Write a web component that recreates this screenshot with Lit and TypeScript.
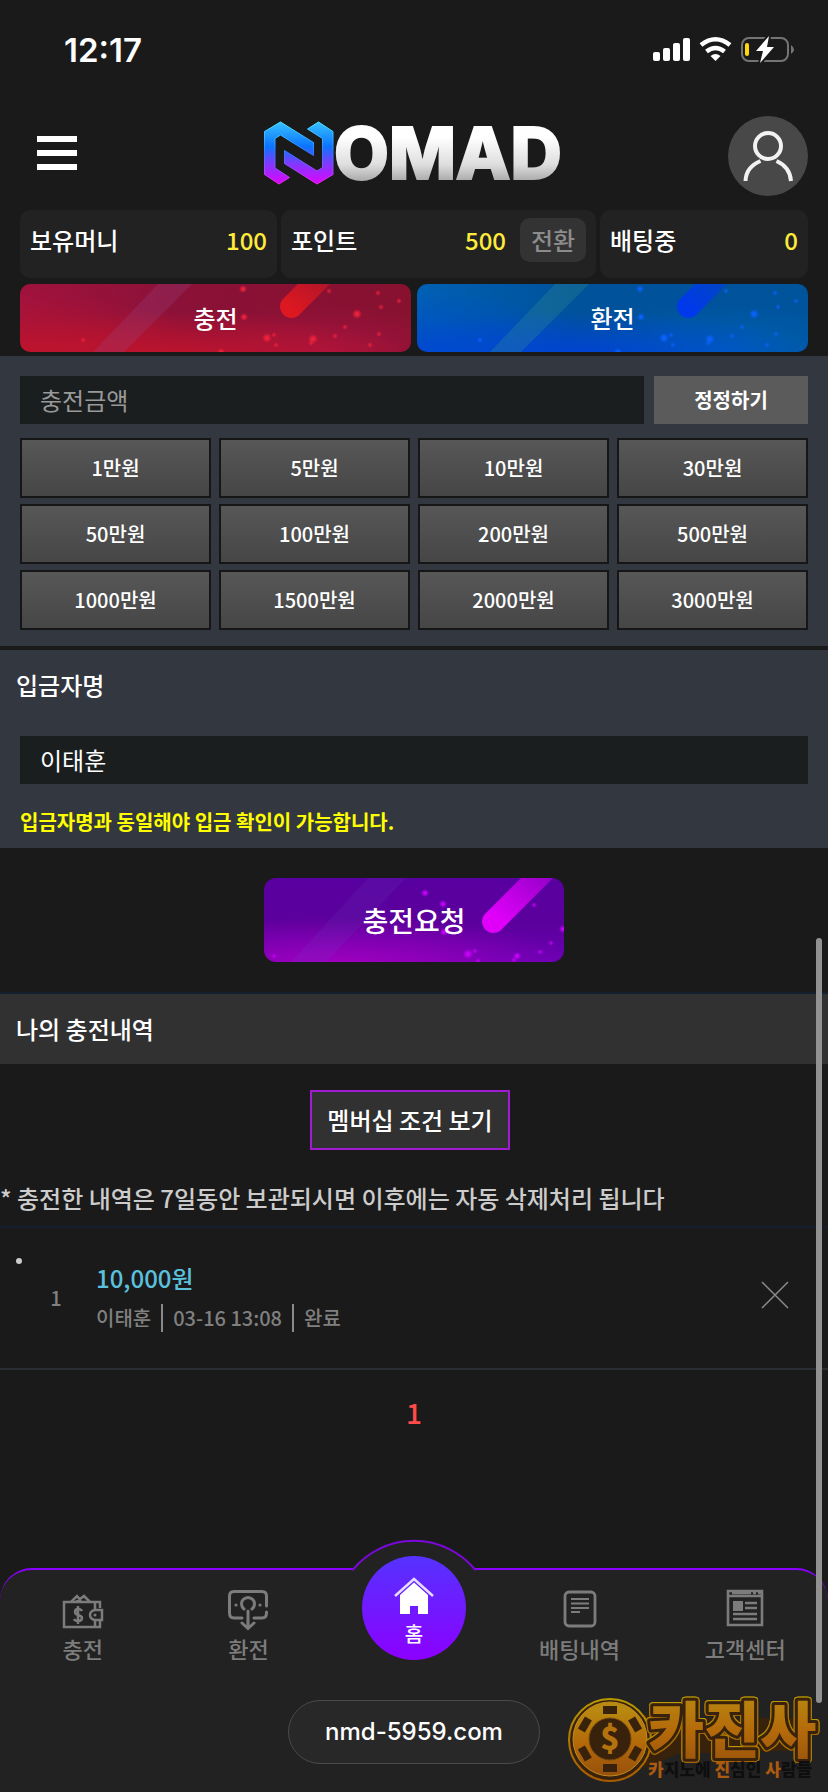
import { LitElement, html, css, svg } from "lit";
import { customElement, property, state } from "lit/decorators.js";

type Dot = [number, number, number];

const WIDE_DOTS: Dot[] = [
  [223, 5, 3], [224, 33, 3], [247, 54, 4], [254, 51, 2], [256, 61, 2], [293, 55, 4], [291, 59, 2],
  [315, 52, 2], [325, 43, 2], [337, 30, 4], [361, 23, 2], [358, 9, 2], [379, 17, 2], [309, 7, 2],
  [359, 50, 2], [350, 61, 2], [63, 56, 2], [201, 68, 3],
];
const COMPACT_DOTS: Dot[] = [
  [161, 15, 3], [179, 26, 3], [180, 54, 3], [204, 76, 4], [211, 73, 2], [214, 83, 2], [253, 78, 3],
  [250, 82, 2], [276, 74, 2], [287, 65, 2], [299, 51, 3], [270, 27, 2], [10, 78, 2],
];

/** Button with a glowing meteor backdrop. */
@customElement("glow-button")
class GlowButton extends LitElement {
  @property() tone = "red";
  @property() label = "";

  static styles = css`
    :host { display: block; }
    button {
      position: relative; display: block; width: 100%; height: 68px; padding: 0; border: 0;
      border-radius: 10px; overflow: hidden; color: #fff; cursor: pointer;
      font: 500 24px/36px "Noto Sans CJK KR", sans-serif;
    }
    .label { position: relative; }
    .art { position: absolute; inset: 0; width: 100%; height: 100%; }
    .red { background: radial-gradient(ellipse 60% 70% at 42% 110%, #c8142bdd, #c8142b00), radial-gradient(ellipse 50% 90% at 0 100%, #c0142acc, #c0142a00), radial-gradient(ellipse 40% 70% at 78% 100%, #b01446aa, #b0144600), linear-gradient(90deg, #a0123e, #8b1138 40%, #87112f); }
    .blue { background: radial-gradient(ellipse 60% 70% at 42% 110%, #0040e0dd, #0040e000), radial-gradient(ellipse 50% 90% at 0 100%, #0048d0cc, #0048d000), radial-gradient(ellipse 40% 70% at 78% 100%, #0066c4aa, #0066c400), linear-gradient(90deg, #0060b4, #00529a 40%, #00549c); }
    .purple {
      height: 84px; border-radius: 12px; font-size: 28px; line-height: 40px;
      background: radial-gradient(ellipse 80% 62% at 26% 108%, #a800c0ee, #a800c000), linear-gradient(180deg, #5800a0, #5c009c 55%, #6a00b4);
    }
  `;

  render() {
    const compact = this.tone === "purple";
    const dotColor = { red: "#f0223c", blue: "#0a62ff", purple: "#cc00ff" }[this.tone];
    const stripe = { red: "#9a4a8a", blue: "#3fa08a", purple: "#6a50c8" }[this.tone];
    const meteor = { red: "#dd1820", blue: "#0038ec", purple: "#e000fa" }[this.tone];
    const dots = compact ? COMPACT_DOTS : WIDE_DOTS;
    return html`<button type="button" class=${this.tone}>
      <svg class="art" viewBox=${compact ? "0 0 300 84" : "0 0 391 68"} preserveAspectRatio="xMidYMid slice" aria-hidden="true">
        <defs>
          <linearGradient id="meteor" x1="0" y1="1" x2="1" y2="0">
            <stop offset="0.2" stop-color=${meteor} />
            <stop offset="1" stop-color=${meteor} stop-opacity="0.35" />
          </linearGradient>
          <radialGradient id="dot">
            <stop offset="0.2" stop-color=${dotColor} />
            <stop offset="1" stop-color=${dotColor} stop-opacity="0" />
          </radialGradient>
        </defs>
        ${compact
          ? svg`<path d="M104 0H142L62 84H27Z" fill=${stripe} opacity="0.12"/>
                <path d="M220 37 266 -9H298L236 53A11.500 11.500 0 0 1 220 37Z" fill="url(#meteor)"/>`
          : svg`<path d="M138 0H172L104 68H73Z" fill=${stripe} opacity="0.24"/>
                <path d="M262 16 286 -8H318L278 32A11.500 11.500 0 0 1 262 16Z" fill="url(#meteor)"/>`}
        ${dots.map(([x, y, r]) => svg`<circle cx=${x} cy=${y} r=${r + 1} opacity=${r > 2 ? 1 : 0.7} fill="url(#dot)"/>`)}
      </svg>
      <span class="label">${this.label}</span>
    </button>`;
  }
}

const walletIcon = svg`
  <g fill="none" stroke="currentColor" stroke-width="2.500">
    <path d="M37 14V8H1V33H37V27M32 8V15M32 26V33"/>
    <path d="M8 8 14 2 18 7M13 8 21 2 27 8M15 5 18 8"/>
    <path d="M39 16H32Q27 17 27 21T32 26H39Z"/>
    <path d="M19 17Q18 15 15 15 12 15 12 18 12 20 15 21 19 22 19 24 19 27 15 27 12 27 11 25M15 12V30"/>
  </g><circle cx="32" cy="21" r="1.500" fill="currentColor"/>`;
const withdrawIcon = svg`
  <g fill="none" stroke="currentColor" stroke-width="3" stroke-linecap="round">
    <path d="M14 28H6Q1.500 28 1.500 23V6Q1.500 1.500 6 1.500H34Q38.500 1.500 38.500 6V16M38.500 22V23Q38.500 28 34 28H26"/>
    <path d="M16 19A6.500 6.500 0 1 1 24 19M20 21V38M14 33 20 38.500 26 33"/>
  </g><circle cx="8" cy="15" r="1.600" fill="currentColor"/><circle cx="32" cy="15" r="1.600" fill="currentColor"/>`;
const homeIcon = svg`
  <path d="M1 20 20 3 39 20" fill="none" stroke="#e6dcff" stroke-width="2.500"/>
  <path d="M6 19 20 6.500 34 19V38H24V30H16V38H6Z" fill="#fff"/>`;
const listIcon = svg`
  <rect x="5" y="2" width="30" height="34" rx="4" fill="none" stroke="currentColor" stroke-width="2.800"/>
  <path d="M11 9H29M11 13.500H29M11 18H29M11 22H20" stroke="currentColor" stroke-width="2.200"/>`;
const newsIcon = svg`
  <path d="M3 1V35H37V1Z" fill="none" stroke="currentColor" stroke-width="2.600"/>
  <path d="M2 6H38M7 3H26M28 3H31M33 3H36" stroke="currentColor" stroke-width="2.600"/>
  <path d="M8 11H18V21H8Z" fill="currentColor"/>
  <path d="M20 13H32M20 18H32M8 24H32M8 29H32" stroke="currentColor" stroke-width="2.400"/>`;

@customElement("app-root")
class AppRoot extends LitElement {
  @state() private amount = "";

  static styles = css`
    :host {
      position: relative; display: flex; flex-direction: column; min-height: 100vh; overflow: hidden;
      background: #1a1a1a; color: #fff; font: 500 24px/36px "Noto Sans CJK KR", sans-serif;
    }
    * { box-sizing: border-box; }
    button, input { font: inherit; color: inherit; border: 0; margin: 0; padding: 0; border-radius: 0; }
    button { cursor: pointer; background: none; }
    a { color: inherit; text-decoration: none; }
    svg { display: block; overflow: visible; }
    .status { display: flex; justify-content: space-between; align-items: center; height: 100px; padding: 0 32px 0 64px; }
    .time { font: 600 33px/40px Inter, sans-serif; }
    .header { display: flex; justify-content: space-between; align-items: flex-start; height: 110px; padding: 16px 20px 0; }
    .menu { display: flex; flex-direction: column; gap: 8px; width: 80px; padding: 20px 0 0 17px; }
    .menu i { width: 40px; height: 6px; background: #fff; }
    .logo { margin-top: 5px; }
    .avatar { display: grid; place-items: center; width: 80px; height: 80px; border-radius: 50%; background: #484848; }
    .brand { font: 800 71px Inter, sans-serif; }
    .wallet { display: grid; grid-template-columns: 257fr 315fr 208fr; gap: 4px; padding: 0 20px; }
    .box { display: flex; justify-content: space-between; align-items: flex-start; height: 68px; padding: 8px 10px; border-radius: 10px; background: #222; line-height: 44px; }
    .right { display: flex; gap: 14px; }
    .yellow { color: #ffeb3b; }
    .swap { width: 66px; height: 44px; border-radius: 10px; background: #333; color: #8c8c8c; }
    .tabs { display: grid; grid-template-columns: 1fr 1fr; gap: 6px; padding: 6px 20px 4px; }
    .panel { background: #33373f; }
    .amount { padding: 20px 20px 16px; margin-bottom: 4px; }
    .entry { display: flex; gap: 10px; }
    .field { flex: 1; min-width: 0; width: 100%; height: 48px; padding: 0 20px 2px; background: #1b1e1f; font-weight: 400; outline: 0; }
    .field::placeholder { color: #999; opacity: 1; }
    .fix { width: 154px; background: #5b5b5b; font-size: 20px; font-weight: 700; }
    .presets { display: grid; grid-template-columns: repeat(4, 1fr); gap: 6px 8px; margin-top: 14px; }
    .presets button { height: 60px; border: 2px solid #161616; background: linear-gradient(#575757, #464646); font-size: 20px; }
    .name { padding: 17px 20px 12px; }
    .name label { display: block; margin: 0 -4px 33px; }
    .warn { margin: 24px 0 0; line-height: 28px; font-size: 20px; font-weight: 700; color: #ff0; }
    .submit { width: 300px; margin: 30px auto; }
    .title { margin: 0; padding: 17px 16px; height: 72px; border-top: 2px solid #14202e; background: #313131; font: inherit; }
    .terms { display: flex; justify-content: center; padding: 26px 8px 30px 0; }
    .member { width: 200px; height: 60px; border: 2px solid #a01cd2; background: #313131; }
    .note { margin: 0; height: 48px; color: #ccc; border-bottom: 2px solid #141e30; }
    .history { margin: 0; padding: 0; list-style: none; }
    .item { position: relative; display: flex; align-items: center; height: 142px; padding: 0 40px 0 18px; border-bottom: 2px solid #2a2e33; }
    .item::before { content: ""; position: absolute; left: 16px; top: 30px; width: 6px; height: 6px; border-radius: 50%; background: #ccc; }
    .no { width: 76px; text-align: center; font-size: 20px; color: #808080; }
    .info { flex: 1; padding: 0 0 4px 2px; }
    .won { color: #5bc0de; }
    .meta { display: flex; align-items: center; margin-top: 8px; font-size: 20px; line-height: 28px; color: #808080; }
    .meta span + span { margin-left: 10px; padding-left: 10px; border-left: 2px solid #8a8a8a; }
    .delete { padding-bottom: 6px; }
    .pages { padding: 22px 0; text-align: center; font-size: 28px; line-height: 40px; }
    .pages a { color: #ff4b4b; }
    .nav { position: relative; margin-top: auto; height: 224px; background: #222; border-top: 2px solid #8c00ff; border-radius: 32px 32px 0 0; }
    .bump { position: absolute; left: 50%; top: -31px; transform: translateX(-50%); }
    .links { position: relative; display: grid; grid-template-columns: repeat(5, 1fr); color: #7c7c7c; font-size: 22px; line-height: 32px; }
    .link { display: flex; flex-direction: column; align-items: center; gap: 2px; padding-top: 20px; }
    .home { justify-self: center; width: 104px; height: 104px; margin-top: -14px; border-radius: 50%; background: linear-gradient(#5533ff, #8c00ff); color: #fff; font-size: 20px; }
    .url { display: block; width: 252px; height: 64px; margin: 36px auto 0; border: 1px solid #4a4a4a; border-radius: 32px; background: #282828; text-align: center; font: 500 24px/62px Inter, sans-serif; }
    .stamp { position: absolute; right: 8px; bottom: 8px; }
    .stamp text { font-family: "Noto Sans CJK KR", sans-serif; font-weight: 900; }
    .big { filter: drop-shadow(1px 0 #a87600) drop-shadow(-1px 0 #a87600) drop-shadow(0 1px #a86400) drop-shadow(0 -1px #b89a00); }
    .big text { paint-order: stroke; }
    .scroll { position: absolute; right: 6px; bottom: 89px; width: 6px; height: 765px; border-radius: 3px; background: #919191; }
  `;

  private renderStatus() {
    return html`<div class="status">
      <span class="time">12:17</span>
      <svg width="144" height="30" viewBox="0 0 144 30" aria-label="신호, 와이파이, 배터리">
        <g fill="#fff">
          <rect x="1" y="17" width="7" height="9" rx="2" /><rect x="11" y="13" width="7" height="13" rx="2" />
          <rect x="21" y="8" width="7" height="18" rx="2" /><rect x="31" y="3" width="7" height="23" rx="2" />
          <path d="M63.500 26 58.500 21Q63.500 17 68.500 21Z" />
        </g>
        <g fill="none" stroke="#fff" stroke-width="4.500">
          <path d="M49 10Q63.500 -1.500 78 10M54.500 16.500Q63.500 9.500 72.500 16.500" />
        </g>
        <rect x="90" y="3" width="46" height="23" rx="7" fill="none" stroke="#747474" stroke-width="2" />
        <path d="M139 10Q145 14.500 139 19Z" fill="#747474" />
        <rect x="93" y="8" width="4" height="13" rx="2" fill="#ffd60a" />
        <path d="M117 1 104 16H111L108 28 122 12H115Z" fill="#fff" stroke="#1a1a1a" stroke-width="4" paint-order="stroke" stroke-linejoin="round" />
      </svg>
    </div>`;
  }

  private renderHeader() {
    return html`<header class="header">
      <button class="menu" type="button" aria-label="메뉴"><i></i><i></i><i></i></button>
      <svg class="logo" width="300" height="64" viewBox="0 0 300 64" role="img" aria-label="NOMAD">
        <defs>
          <linearGradient id="neon" gradientUnits="userSpaceOnUse" x1="0" y1="0" x2="0" y2="64">
            <stop offset="0" stop-color="#39c4ff" /><stop offset="0.400" stop-color="#0b74ff" />
            <stop offset="0.650" stop-color="#7a3cff" /><stop offset="1" stop-color="#e400ff" />
          </linearGradient>
          <linearGradient id="edge" gradientUnits="userSpaceOnUse" x1="0" y1="0" x2="0" y2="64">
            <stop offset="0" stop-color="#4ff0ff" /><stop offset="0.500" stop-color="#2a7aff" /><stop offset="1" stop-color="#ff20f0" />
          </linearGradient>
          <linearGradient id="steel" gradientUnits="userSpaceOnUse" x1="0" y1="5" x2="0" y2="60">
            <stop offset="0.200" stop-color="#fff" /><stop offset="0.700" stop-color="#dedede" /><stop offset="1" stop-color="#aaa" />
          </linearGradient>
        </defs>
        <g fill="url(#neon)" stroke="url(#edge)">
          <path d="M.500 10.500 16.500 1 49.500 21.500V34.500L16.500 14 11 17.500V47L25.500 56.500 15 63 .500 53.500Z" />
          <path d="M43.500 8 54.500 1 69 10.500V53.500L53 63 20.500 42.500V29.500L53 50 58.500 46.500V17.500Z" />
        </g>
        <text class="brand" x="70" y="58" fill="url(#steel)" stroke="url(#steel)" stroke-width="2">OMAD</text>
      </svg>
      <button class="avatar" type="button" aria-label="내 정보">
        <svg width="52" height="52" viewBox="0 0 52 52" fill="none" stroke="#f2f2f2" stroke-width="4">
          <circle cx="26" cy="16" r="13" /><path d="M3.500 51Q4 37 18.500 31M34.500 31Q48 37 49 51" />
        </svg>
      </button>
    </header>`;
  }

  private renderForm() {
    const presets = [1, 5, 10, 30, 50, 100, 200, 500, 1000, 1500, 2000, 3000];
    return html`
      <section class="panel amount">
        <div class="entry">
          <input class="field" aria-label="충전금액" placeholder="충전금액" .value=${this.amount} />
          <button class="fix" type="button" @click=${() => (this.amount = "")}>정정하기</button>
        </div>
        <div class="presets">
          ${presets.map((n) => html`<button type="button" @click=${() => (this.amount = String(n * 10000))}>${n}만원</button>`)}
        </div>
      </section>
      <section class="panel name">
        <label for="depositor">입금자명</label>
        <input class="field" id="depositor" value="이태훈" />
        <p class="warn">입금자명과 동일해야 입금 확인이 가능합니다.</p>
      </section>
      <glow-button class="submit" tone="purple" label="충전요청"></glow-button>`;
  }

  private renderHistory() {
    return html`
      <h2 class="title">나의 충전내역</h2>
      <div class="terms"><button class="member" type="button">멤버십 조건 보기</button></div>
      <p class="note">* 충전한 내역은 7일동안 보관되시면 이후에는 자동 삭제처리 됩니다</p>
      <ul class="history">
        <li class="item">
          <span class="no">1</span>
          <div class="info">
            <div class="won">10,000원</div>
            <div class="meta"><span>이태훈</span><span>03-16 13:08</span><span>완료</span></div>
          </div>
          <button class="delete" type="button" aria-label="삭제">
            <svg width="26" height="26" viewBox="0 0 26 26" stroke="#8a8a8a" stroke-width="1.500"><path d="M0 0 26 26M26 0 0 26" /></svg>
          </button>
        </li>
      </ul>
      <div class="pages"><a href="#1">1</a></div>`;
  }

  private renderLink(label: string, icon: unknown, extra = "") {
    return html`<a class="link ${extra}" href="#"><svg width="40" height="40" viewBox="0 0 40 40" aria-hidden="true">${icon}</svg>${label}</a>`;
  }

  private renderNav() {
    return html`<nav class="nav">
      <svg class="bump" width="124" height="34" viewBox="0 0 124 34" aria-hidden="true">
        <path d="M0 34V31L1 30A79 79 0 0 1 123 30L124 31V34Z" fill="#222" />
        <path d="M0 30.500H1A79 79 0 0 1 123 30.500H124" fill="none" stroke="#7a08d8" stroke-width="2" />
      </svg>
      <div class="links">
        ${this.renderLink("충전", svg`<g transform="translate(0 4)">${walletIcon}</g>`)}
        ${this.renderLink("환전", withdrawIcon)}
        ${this.renderLink("홈", homeIcon, "home")}
        ${this.renderLink("배팅내역", listIcon)}
        ${this.renderLink("고객센터", newsIcon)}
      </div>
      <a class="url" href="#">nmd-5959.com</a>
    </nav>`;
  }

  private renderStamp() {
    const pockets = [0, 60, 120, 180, 240, 300];
    return html`<svg class="stamp" width="252" height="88" viewBox="0 0 252 88" aria-label="카진사">
      <defs>
        <linearGradient id="gold" x1="0" y1="0" x2="0" y2="1">
          <stop offset="0.100" stop-color="#b88a10" /><stop offset="0.550" stop-color="#b46a0a" /><stop offset="1" stop-color="#96500c" />
        </linearGradient>
        <linearGradient id="rim" x1="0" y1="0" x2="0" y2="1">
          <stop offset="0" stop-color="#b89a00" /><stop offset="1" stop-color="#a85a00" />
        </linearGradient>
      </defs>
      <path d="M60 15 96 22H236L240 54 110 58 76 72Z" fill="#38220c" />
      <circle cx="42" cy="44" r="41" fill="#38220c" stroke="url(#rim)" stroke-width="2" />
      <circle cx="42" cy="43" r="37" fill="url(#gold)" stroke="#c08a20" />
      <circle cx="42" cy="43" r="21" fill="#38220c" stroke="#7a4a0c" />
      ${pockets.map((a) => svg`<rect x="35" y="10" width="14" height="8" fill="#38220c" transform="rotate(${a} 42 43)"/>`)}
      <text x="42" y="54" text-anchor="middle" font-size="32" fill="#b4720e">$</text>
      <g class="big"><text x="80" y="57" font-size="61" fill="url(#gold)" stroke="#38220c" stroke-width="6" stroke-linejoin="round">카진사</text></g>
      <text x="80" y="80" font-size="17" fill="#0e0e0e"><tspan fill="#ac5a10">카</tspan>지노에 <tspan fill="#ac5a10">진</tspan>심인 <tspan fill="#ac5a10">사</tspan>람들</text>
    </svg>`;
  }

  render() {
    return html`
      ${this.renderStatus()} ${this.renderHeader()}
      <div class="wallet">
        <div class="box"><span>보유머니</span><span class="yellow">100</span></div>
        <div class="box">
          <span>포인트</span>
          <div class="right"><span class="yellow">500</span><button class="swap" type="button">전환</button></div>
        </div>
        <div class="box"><span>배팅중</span><span class="yellow">0</span></div>
      </div>
      <div class="tabs">
        <glow-button tone="red" label="충전"></glow-button>
        <glow-button tone="blue" label="환전"></glow-button>
      </div>
      ${this.renderForm()} ${this.renderHistory()} ${this.renderNav()} ${this.renderStamp()}
      <div class="scroll"></div>`;
  }
}
